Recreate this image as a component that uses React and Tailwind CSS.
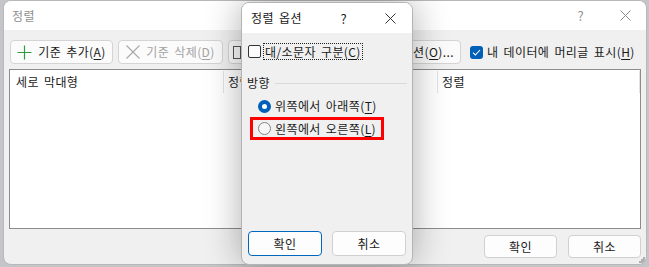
import React from "react";

const Key = ({ children }) => <span className="underline underline-offset-2">{children}</span>;

const CloseIcon = ({ className }) => (
  <svg width="11" height="11" viewBox="0 0 11 11" className={className}>
    <path d="M0.5 0.5 L10.5 10.5 M10.5 0.5 L0.5 10.5" stroke="currentColor" strokeWidth="1" fill="none" />
  </svg>
);

const ToolButton = ({ width, children, disabled }) => (
  <div
    className={`h-[24px] ${width} flex items-center justify-center gap-[6px] rounded-[4px] border border-[#d4d4d4] bg-[#fbfbfb] ${
      disabled ? "text-[#a3a3a3]" : "text-[#1a1a1a]"
    }`}
  >
    {children}
  </div>
);

const DialogButton = ({ children, primary, width = "w-[73px]", height = "h-[23px]" }) => (
  <div
    className={`${width} ${height} flex items-center justify-center rounded-[4px] bg-[#fdfdfd] text-[#1a1a1a] ${
      primary ? "border border-[#0067c0]" : "border border-[#d0d0d0]"
    }`}
  >
    {children}
  </div>
);

const SortOptions = () => (
  <div className="absolute left-[241px] top-[2px] w-[172px] h-[263px] rounded-[8px] border border-[#b4b4b4] bg-[#f0f0f0] overflow-hidden flex flex-col shadow-[0_0_36px_rgba(0,0,0,0.32)]">
    {/* title */}
    <div className="h-[30px] bg-white flex items-center pl-[9px] text-[#1a1a1a]">
      <span>정렬 옵션</span>
      <span className="ml-auto text-[13px]">?</span>
      <CloseIcon className="ml-[38px] mr-[16px] text-[#333]" />
    </div>

    {/* case sensitive */}
    <div className="mt-[10px] ml-[6px] flex items-center h-[17px]">
      <div className="w-[13px] h-[13px] rounded-[2px] border border-[#333] bg-[#fbfbfb]" />
      <div className="ml-[2px] h-[17px] px-[1px] flex items-center border border-dotted border-[#222]">
        대/소문자 구분(<Key>C</Key>)
      </div>
    </div>

    {/* orientation */}
    <div className="mt-[15px] ml-[5px] mr-[5px] h-[16px] flex items-center">
      <span>방향</span>
      <div className="ml-[5px] flex-1 h-px bg-[#d9d9d9]" />
    </div>

    <div className="mt-[7px] ml-[16px] h-[16px] flex items-center">
      <div className="w-[13px] h-[13px] rounded-full bg-[#005fb8] flex items-center justify-center">
        <div className="w-[5px] h-[5px] rounded-full bg-white" />
      </div>
      <span className="ml-[4px] whitespace-nowrap">위쪽에서 아래쪽(<Key>T</Key>)</span>
    </div>

    <div className="mt-[3px] ml-[8px] w-[134px] h-[23px] border-[3px] border-[#ff0000] flex items-center pl-[5px]">
      <div className="w-[13px] h-[13px] shrink-0 rounded-full border border-[#858585] bg-[#f7f7f7]" />
      <span className="ml-[4px] whitespace-nowrap">왼쪽에서 오른쪽(<Key>L</Key>)</span>
    </div>

    {/* buttons */}
    <div className="mt-auto mb-[8px] ml-[6px] flex gap-[10px]">
      <DialogButton primary width="w-[74px]" height="h-[25px]">확인</DialogButton>
      <DialogButton width="w-[74px]" height="h-[25px]">취소</DialogButton>
    </div>
  </div>
);

export default function App() {
  return (
    <div className="relative w-[649px] h-[267px] overflow-hidden bg-[#c3c5c9] pl-[3px] font-['Noto_Sans_CJK_KR',sans-serif] text-[12px] leading-none tracking-[0.4px] [word-spacing:2px] text-[#1a1a1a]">
      {/* sort dialog */}
      <div className="w-[644px] h-[265px] rounded-[8px] border border-[#b8b8b8] bg-[#f0f0f0] overflow-hidden flex flex-col">
        <div className="h-[29px] bg-white flex items-center pl-[8px] text-[#8f8f8f]">
          <span>정렬</span>
          <span className="ml-auto text-[13px]">?</span>
          <CloseIcon className="ml-[36px] mr-[15px] text-[#8a8a8a]" />
        </div>

        {/* toolbar */}
        <div className="h-[39px] pt-[10px] pl-[6px] flex items-start">
          <ToolButton width="w-[103px]">
            <svg width="15" height="15" viewBox="0 0 15 15">
              <path d="M7.5 0.5 V14.5 M0.5 7.5 H14.5" stroke="#2f9a3f" strokeWidth="1.2" fill="none" />
            </svg>
            <span>기준 추가(<Key>A</Key>)</span>
          </ToolButton>
          <div className="w-[5px]" />
          <ToolButton width="w-[105px]" disabled>
            <svg width="14" height="14" viewBox="0 0 14 14">
              <path d="M0.5 0.5 L13.5 13.5 M13.5 0.5 L0.5 13.5" stroke="#a8a8a8" strokeWidth="1.1" fill="none" />
            </svg>
            <span>기준 삭제(<Key>D</Key>)</span>
          </ToolButton>
          <div className="w-[5px]" />
          {/* copy button, mostly hidden behind the options dialog */}
          <div className="h-[24px] w-[100px] flex items-center pl-[4px] rounded-[4px] border border-[#d4d4d4] bg-[#fbfbfb]">
            <div className="w-[8px] h-[13px] border border-[#555]" />
          </div>
          <div className="w-[5px]" />
          <div className="h-[24px] w-[22px] rounded-[4px] border border-[#d4d4d4] bg-[#fbfbfb]" />
          <div className="w-[5px]" />
          <div className="h-[24px] w-[22px] rounded-[4px] border border-[#d4d4d4] bg-[#fbfbfb]" />
          <div className="w-[5px]" />
          <div className="h-[24px] w-[74px] flex items-center justify-end pr-[6px] rounded-[4px] border border-[#d4d4d4] bg-[#fbfbfb] whitespace-nowrap">
            옵션(<Key>O</Key>)...
          </div>
          <div className="ml-[9px] h-[24px] flex items-center">
            <div className="w-[13px] h-[13px] rounded-[3px] bg-[#005fb8] flex items-center justify-center">
              <svg width="9" height="7" viewBox="0 0 9 7">
                <path d="M1 3.6 L3.4 6 L8 1" stroke="white" strokeWidth="1.1" fill="none" />
              </svg>
            </div>
            <span className="ml-[4px] whitespace-nowrap">내 데이터에 머리글 표시(<Key>H</Key>)</span>
          </div>
        </div>

        {/* criteria list */}
        <div className="mx-[5px] h-[160px] border border-[#8c8c8c] bg-white">
          <div className="h-[24px] flex items-center">
            <div className="w-[214px] h-[22px] flex items-center pl-[6px] border-r border-[#e3e3e3]">세로 막대형</div>
            <div className="w-[214px] h-[22px] flex items-center pl-[4px] border-r border-[#e3e3e3]">정렬 기준</div>
            <div className="w-[202px] h-[22px] flex items-center pl-[4px] border-r border-[#e3e3e3]">정렬</div>
          </div>
        </div>

        {/* footer */}
        <div className="flex-1 flex items-start justify-end pt-[6px] pr-[5px] gap-[11px] relative">
          <DialogButton>확인</DialogButton>
          <DialogButton>취소</DialogButton>
          <svg width="6" height="6" viewBox="0 0 6 6" className="absolute right-[1px] bottom-[1px]">
            <rect x="4" y="0" width="2" height="2" fill="#b0b0b0" />
            <rect x="2" y="2" width="2" height="2" fill="#b0b0b0" />
            <rect x="4" y="2" width="2" height="2" fill="#b0b0b0" />
            <rect x="0" y="4" width="2" height="2" fill="#b0b0b0" />
            <rect x="2" y="4" width="2" height="2" fill="#b0b0b0" />
            <rect x="4" y="4" width="2" height="2" fill="#b0b0b0" />
          </svg>
        </div>
      </div>

      <SortOptions />
    </div>
  );
}
